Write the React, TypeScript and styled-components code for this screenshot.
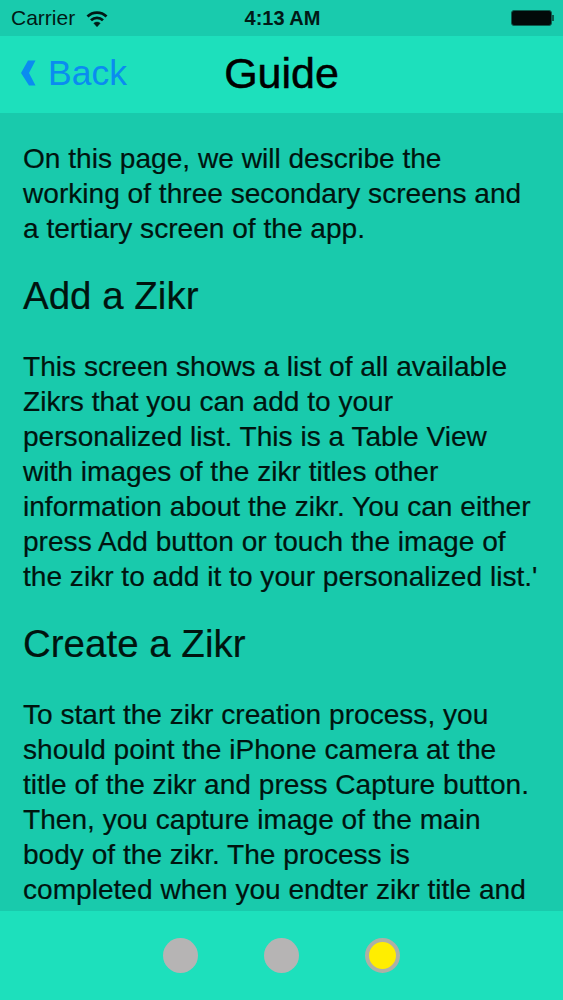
import React from 'react';
import styled, { createGlobalStyle } from 'styled-components';

const GlobalStyle = createGlobalStyle`
  html, body {
    margin: 0;
    padding: 0;
    height: 100%;
  }
  body {
    font-family: "Liberation Sans", Arial, sans-serif;
    background: #19caac;
  }
`;

const App: React.FC = () => {
  return (
    <Screen>
      <GlobalStyle />
      <StatusBar>
        <StatusLeft>
          <span>Carrier</span>
          <svg width="22" height="17" viewBox="0 0 22 17" fill="none" stroke="#011a16" strokeWidth="2.800">
            <path d="M1.500 6.500C6.800 1.300 15.200 1.300 20.500 6.500" />
            <path d="M5 10.200C8.500 7 13.500 7 17 10.200" />
            <path d="M7.800 13.200c1.900-1.500 4.500-1.500 6.400 0L11 16.800z" fill="#011a16" strokeWidth="0.5" />
          </svg>
        </StatusLeft>
        <StatusTime>4:13 AM</StatusTime>
        <Battery>
          <BatteryBody />
          <BatteryTip />
        </Battery>
      </StatusBar>

      <NavBar>
        <BackLink>
          <svg width="16" height="26" viewBox="0 0 16 26" fill="#0a8cf0">
            <path d="M8 .5h7.500L9 13l6.500 12.500H9L1 13z" />
          </svg>
          <span>Back</span>
        </BackLink>
        <NavTitle>Guide</NavTitle>
      </NavBar>

      <Content>
        <Paragraph>
          On this page, we will describe the working of three secondary screens and a tertiary screen of the app.
        </Paragraph>
        <Heading>Add a Zikr</Heading>
        <Paragraph>
          This screen shows a list of all available Zikrs that you can add to your personalized list. This is a Table View with images of the zikr titles other information about the zikr. You can either press Add button or touch the image of the zikr to add it to your personalized list.'
        </Paragraph>
        <Heading>Create a Zikr</Heading>
        <Paragraph>
          To start the zikr creation process, you should point the iPhone camera at the title of the zikr and press Capture button. Then, you capture image of the main body of the zikr. The process is completed when you endter zikr title and
        </Paragraph>
      </Content>

      <TabBar>
        <Dot />
        <Dot />
        <Dot $active />
      </TabBar>
    </Screen>
  );
};

const Screen = styled.div`
  width: 563px;
  height: 1000px;
  display: flex;
  flex-direction: column;
  overflow: hidden;
  background: #19caac;
`;

const StatusBar = styled.div`
  height: 36px;
  flex: none;
  display: grid;
  grid-template-columns: 1fr auto 1fr;
  align-items: center;
  padding: 0 9px 0 11px;
  background: #19cbad;
  color: #011a16;
`;

const StatusLeft = styled.div`
  display: flex;
  align-items: center;
  gap: 11px;
  font-size: 21px;
`;

const StatusTime = styled.div`
  font-size: 20px;
  font-weight: 700;
  color: #011a16;
`;

const Battery = styled.div`
  justify-self: end;
  display: flex;
  align-items: center;
`;

const BatteryBody = styled.div`
  box-sizing: border-box;
  width: 41px;
  height: 16px;
  background: #020a09;
  border: 1.5px solid #0c5c4e;
  border-radius: 3px;
`;

const BatteryTip = styled.div`
  width: 2.5px;
  height: 6px;
  background: #0c5c4e;
`;

const NavBar = styled.div`
  height: 77px;
  flex: none;
  box-sizing: border-box;
  display: grid;
  grid-template-columns: 1fr auto 1fr;
  align-items: center;
  padding: 0 20px 3px;
  background: #1de0bc;
`;

const BackLink = styled.div`
  display: flex;
  align-items: center;
  gap: 12px;
  font-size: 35.5px;
  line-height: 41px;
  color: #0a8cf0;
`;

const NavTitle = styled.div`
  font-size: 43px;
  font-weight: 400;
  color: #000;
  -webkit-text-stroke: 0.5px #000;
`;

const Content = styled.div`
  flex: 1;
  min-height: 0;
  overflow: hidden;
  padding: 28px 23px 0;
  background: #19caac;
  color: #00140f;
`;

const Paragraph = styled.p`
  margin: 0;
  font-size: 28.1px;
  line-height: 35px;
  -webkit-text-stroke: 0.2px #00140f;
`;

const Heading = styled.h2`
  margin: 29px 0 32px;
  font-size: 38.5px;
  line-height: 42px;
  font-weight: 400;
  -webkit-text-stroke: 0.2px #00140f;
`;

const TabBar = styled.div`
  height: 89px;
  flex: none;
  display: flex;
  align-items: center;
  justify-content: center;
  gap: 66px;
  background: #1de0bc;
`;

const Dot = styled.div<{ $active?: boolean }>`
  box-sizing: border-box;
  width: 35px;
  height: 35px;
  border-radius: 50%;
  background: ${p => (p.$active ? '#ffee00' : '#b6b4b4')};
  border: ${p => (p.$active ? '4.500px solid #aeb0a6' : 'none')};
`;

export default App;
